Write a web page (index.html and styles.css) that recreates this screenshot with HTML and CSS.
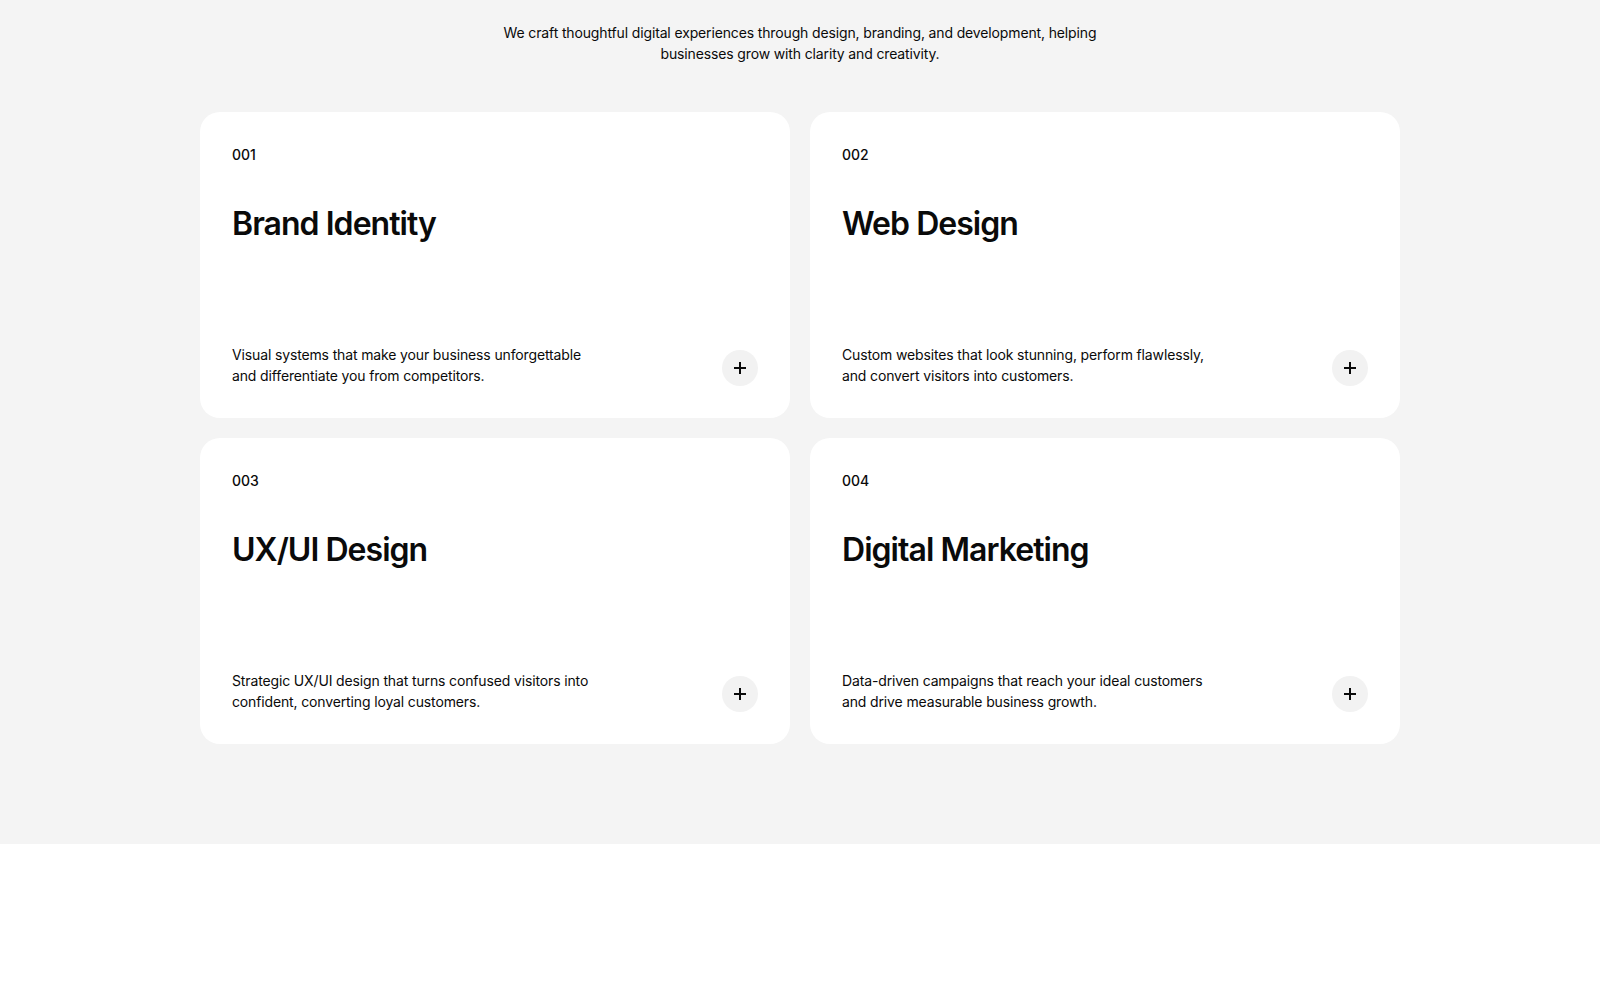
FILE: index.html
```html
<!DOCTYPE html>
<html lang="en">
<head>
  <meta charset="UTF-8" />
  <meta name="viewport" content="width=device-width, initial-scale=1.0" />
  <title>Services</title>
  <link rel="stylesheet" href="styles.css">
</head>
<body>
  <section class="services">
    <p class="services-intro">We craft thoughtful digital experiences through design, branding, and development, helping businesses grow with clarity and creativity.</p>

    <!-- service cards, two per row -->
    <div class="service-grid">
      <article class="service-card">
        <span class="service-num">001</span>
        <h2 class="service-title">Brand Identity</h2>
        <div class="service-foot">
          <p class="service-desc">Visual systems that make your business unforgettable and differentiate you from competitors.</p>
          <button class="service-more" aria-label="More about Brand Identity">
            <svg viewBox="0 0 16 16" width="16" height="16"><path d="M8 2v12M2 8h12" /></svg>
          </button>
        </div>
      </article>

      <article class="service-card">
        <span class="service-num">002</span>
        <h2 class="service-title">Web Design</h2>
        <div class="service-foot">
          <p class="service-desc">Custom websites that look stunning, perform flawlessly, and convert visitors into customers.</p>
          <button class="service-more" aria-label="More about Web Design">
            <svg viewBox="0 0 16 16" width="16" height="16"><path d="M8 2v12M2 8h12" /></svg>
          </button>
        </div>
      </article>

      <article class="service-card">
        <span class="service-num">003</span>
        <h2 class="service-title">UX/UI Design</h2>
        <div class="service-foot">
          <p class="service-desc">Strategic UX/UI design that turns confused visitors into confident, converting loyal customers.</p>
          <button class="service-more" aria-label="More about UX/UI Design">
            <svg viewBox="0 0 16 16" width="16" height="16"><path d="M8 2v12M2 8h12" /></svg>
          </button>
        </div>
      </article>

      <article class="service-card">
        <span class="service-num">004</span>
        <h2 class="service-title">Digital Marketing</h2>
        <div class="service-foot">
          <p class="service-desc">Data-driven campaigns that reach your ideal customers and drive measurable business growth.</p>
          <button class="service-more" aria-label="More about Digital Marketing">
            <svg viewBox="0 0 16 16" width="16" height="16"><path d="M8 2v12M2 8h12" /></svg>
          </button>
        </div>
      </article>
    </div>
  </section>
</body>
</html>
```

FILE: styles.css
```css
:root {
  --page-bg: #f4f4f4;
  --card-bg: #ffffff;
  --ink: #0a0a0a;
  --btn-bg: #f2f2f2;
}

html, body {
  margin: 0;
  background: #fff;
  color: var(--ink);
  font-family: Inter, "Noto Sans", Arial, sans-serif;
}

.services {
  background: var(--page-bg);
  padding: 22px 0 100px;
}

.services-intro {
  max-width: 600px;
  margin: 0 auto 48px;
  text-align: center;
  font-size: 14px;
  line-height: 21px;
  letter-spacing: -0.01em;
}

.service-grid {
  width: 1200px;
  margin: 0 auto;
  display: grid;
  grid-template-columns: 1fr 1fr;
  gap: 20px;
}

.service-card {
  background: var(--card-bg);
  border-radius: 20px;
  min-height: 306px;
  box-sizing: border-box;
  padding: 32px;
  display: flex;
  flex-direction: column;
}

.service-num {
  font-size: 14px;
  font-weight: 500;
  line-height: 21px;
}

.service-title {
  margin: 39px 0 0;
  font-size: 32px;
  font-weight: 600;
  line-height: 40px;
  letter-spacing: -0.03em;
}

.service-foot {
  margin-top: auto;
  display: flex;
  align-items: flex-end;
  justify-content: space-between;
}

.service-desc {
  margin: 0;
  max-width: 370px;
  font-size: 14px;
  line-height: 21px;
  letter-spacing: -0.01em;
}

.service-more {
  width: 36px;
  height: 36px;
  border: none;
  border-radius: 50%;
  background: var(--btn-bg);
  padding: 0;
  display: flex;
  align-items: center;
  justify-content: center;
  cursor: pointer;
}

.service-more svg {
  stroke: var(--ink);
  stroke-width: 2;
  fill: none;
}
```
